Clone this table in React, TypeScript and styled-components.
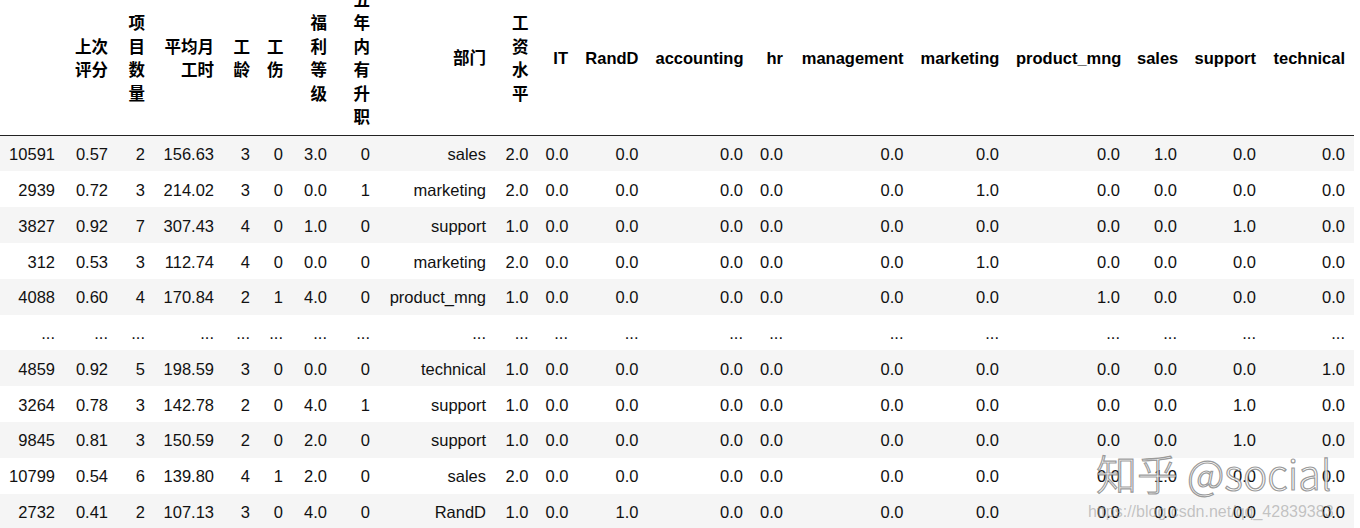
import styled, { createGlobalStyle } from 'styled-components';

const GlobalStyle = createGlobalStyle`
  html, body {
    margin: 0;
    padding: 0;
    background: #ffffff;
    overflow: hidden;
  }
  body {
    font-family: "Liberation Sans", "Noto Sans CJK SC", sans-serif;
  }
`;

const columns = [
  { label: '', width: 63.5 },
  { label: '上次评分', width: 53 },
  { label: '项目数量', width: 37 },
  { label: '平均月工时', width: 69 },
  { label: '工龄', width: 36 },
  { label: '工伤', width: 33 },
  { label: '福利等级', width: 44 },
  { label: '五年内有升职', width: 43 },
  { label: '部门', width: 116 },
  { label: '工资水平', width: 42.5 },
  { label: 'IT', width: 39.5 },
  { label: 'RandD', width: 70.5 },
  { label: 'accounting', width: 104.5 },
  { label: 'hr', width: 40 },
  { label: 'management', width: 120.5 },
  { label: 'marketing', width: 95.5 },
  { label: 'product_mng', width: 121 },
  { label: 'sales', width: 57 },
  { label: 'support', width: 79 },
  { label: 'technical', width: 89 },
];

const departments = [
  'IT',
  'RandD',
  'accounting',
  'hr',
  'management',
  'marketing',
  'product_mng',
  'sales',
  'support',
  'technical',
];

type Row = [string, string, string, string, string, string, string, string, string, string];

const rows: (Row | null)[] = [
  ['10591', '0.57', '2', '156.63', '3', '0', '3.0', '0', 'sales', '2.0'],
  ['2939', '0.72', '3', '214.02', '3', '0', '0.0', '1', 'marketing', '2.0'],
  ['3827', '0.92', '7', '307.43', '4', '0', '1.0', '0', 'support', '1.0'],
  ['312', '0.53', '3', '112.74', '4', '0', '0.0', '0', 'marketing', '2.0'],
  ['4088', '0.60', '4', '170.84', '2', '1', '4.0', '0', 'product_mng', '1.0'],
  null,
  ['4859', '0.92', '5', '198.59', '3', '0', '0.0', '0', 'technical', '1.0'],
  ['3264', '0.78', '3', '142.78', '2', '0', '4.0', '1', 'support', '1.0'],
  ['9845', '0.81', '3', '150.59', '2', '0', '2.0', '0', 'support', '1.0'],
  ['10799', '0.54', '6', '139.80', '4', '1', '2.0', '0', 'sales', '2.0'],
  ['2732', '0.41', '2', '107.13', '3', '0', '4.0', '0', 'RandD', '1.0'],
];

export default function App() {
  return (
    <>
      <GlobalStyle />
      <Output>
        <DataFrame>
          <colgroup>
            {columns.map((c, i) => (
              <col key={i} style={{ width: c.width }} />
            ))}
          </colgroup>
          <thead>
            <tr>
              {columns.map((c, i) => (
                <HeadCell key={i}>{c.label}</HeadCell>
              ))}
            </tr>
          </thead>
          <tbody>
            {rows.map((r, i) =>
              r === null ? (
                <BodyRow key={i}>
                  <IndexCell>...</IndexCell>
                  {columns.slice(1).map((_, j) => (
                    <Cell key={j}>...</Cell>
                  ))}
                </BodyRow>
              ) : (
                <BodyRow key={i}>
                  <IndexCell>{r[0]}</IndexCell>
                  {r.slice(1).map((v, j) => (
                    <Cell key={j}>{v}</Cell>
                  ))}
                  {departments.map((d) => (
                    <Cell key={d}>{d === r[8] ? '1.0' : '0.0'}</Cell>
                  ))}
                </BodyRow>
              )
            )}
          </tbody>
        </DataFrame>

        <Watermark>
          <Brand>知乎 @social</Brand>
          <SourceUrl>https://blog.csdn.net/qq_42839383</SourceUrl>
        </Watermark>
      </Output>
    </>
  );
}

const Output = styled.div`
  position: relative;
  width: 1360px;
  height: 528px;
  overflow: hidden;
`;

const DataFrame = styled.table`
  table-layout: fixed;
  width: 1353.5px;
  margin-top: -19.4px;
  border-collapse: collapse;
  border-spacing: 0;
  font-size: 16.5px;
  color: #111;
`;

const HeadCell = styled.th`
  padding: 8px 8.5px 5px;
  text-align: right;
  vertical-align: middle;
  font-weight: bold;
  line-height: 23.5px;
  color: #000;
  border-bottom: 1px solid #222;
  font-family: "Liberation Sans", "Noto Sans CJK SC", sans-serif;
`;

const BodyRow = styled.tr`
  &:nth-child(odd) {
    background: #f5f5f5;
  }
`;

const Cell = styled.td`
  padding: 9.5px 8.5px 7.5px;
  text-align: right;
  vertical-align: middle;
  line-height: 18.8px;
  white-space: nowrap;
`;

const IndexCell = styled.th`
  padding: 9.5px 8.5px 7.5px;
  text-align: right;
  vertical-align: middle;
  line-height: 18.8px;
  font-weight: normal;
  white-space: nowrap;
`;

const Watermark = styled.div`
  position: absolute;
  left: 1088px;
  top: 449px;
  display: flex;
  flex-direction: column;
  align-items: flex-start;
  pointer-events: none;
`;

const Brand = styled.div`
  margin-left: 8px;
  font-family: "Noto Sans CJK SC", "Liberation Sans", sans-serif;
  font-size: 41px;
  font-weight: 300;
  line-height: 46px;
  color: rgba(255, 255, 255, 0.88);
  -webkit-text-stroke: 1.2px rgba(110, 110, 110, 0.7);
  white-space: nowrap;
`;

const SourceUrl = styled.div`
  margin-top: 7px;
  font-family: "Liberation Sans", sans-serif;
  font-size: 16px;
  line-height: 20px;
  color: rgba(150, 150, 150, 0.55);
  white-space: nowrap;
`;
